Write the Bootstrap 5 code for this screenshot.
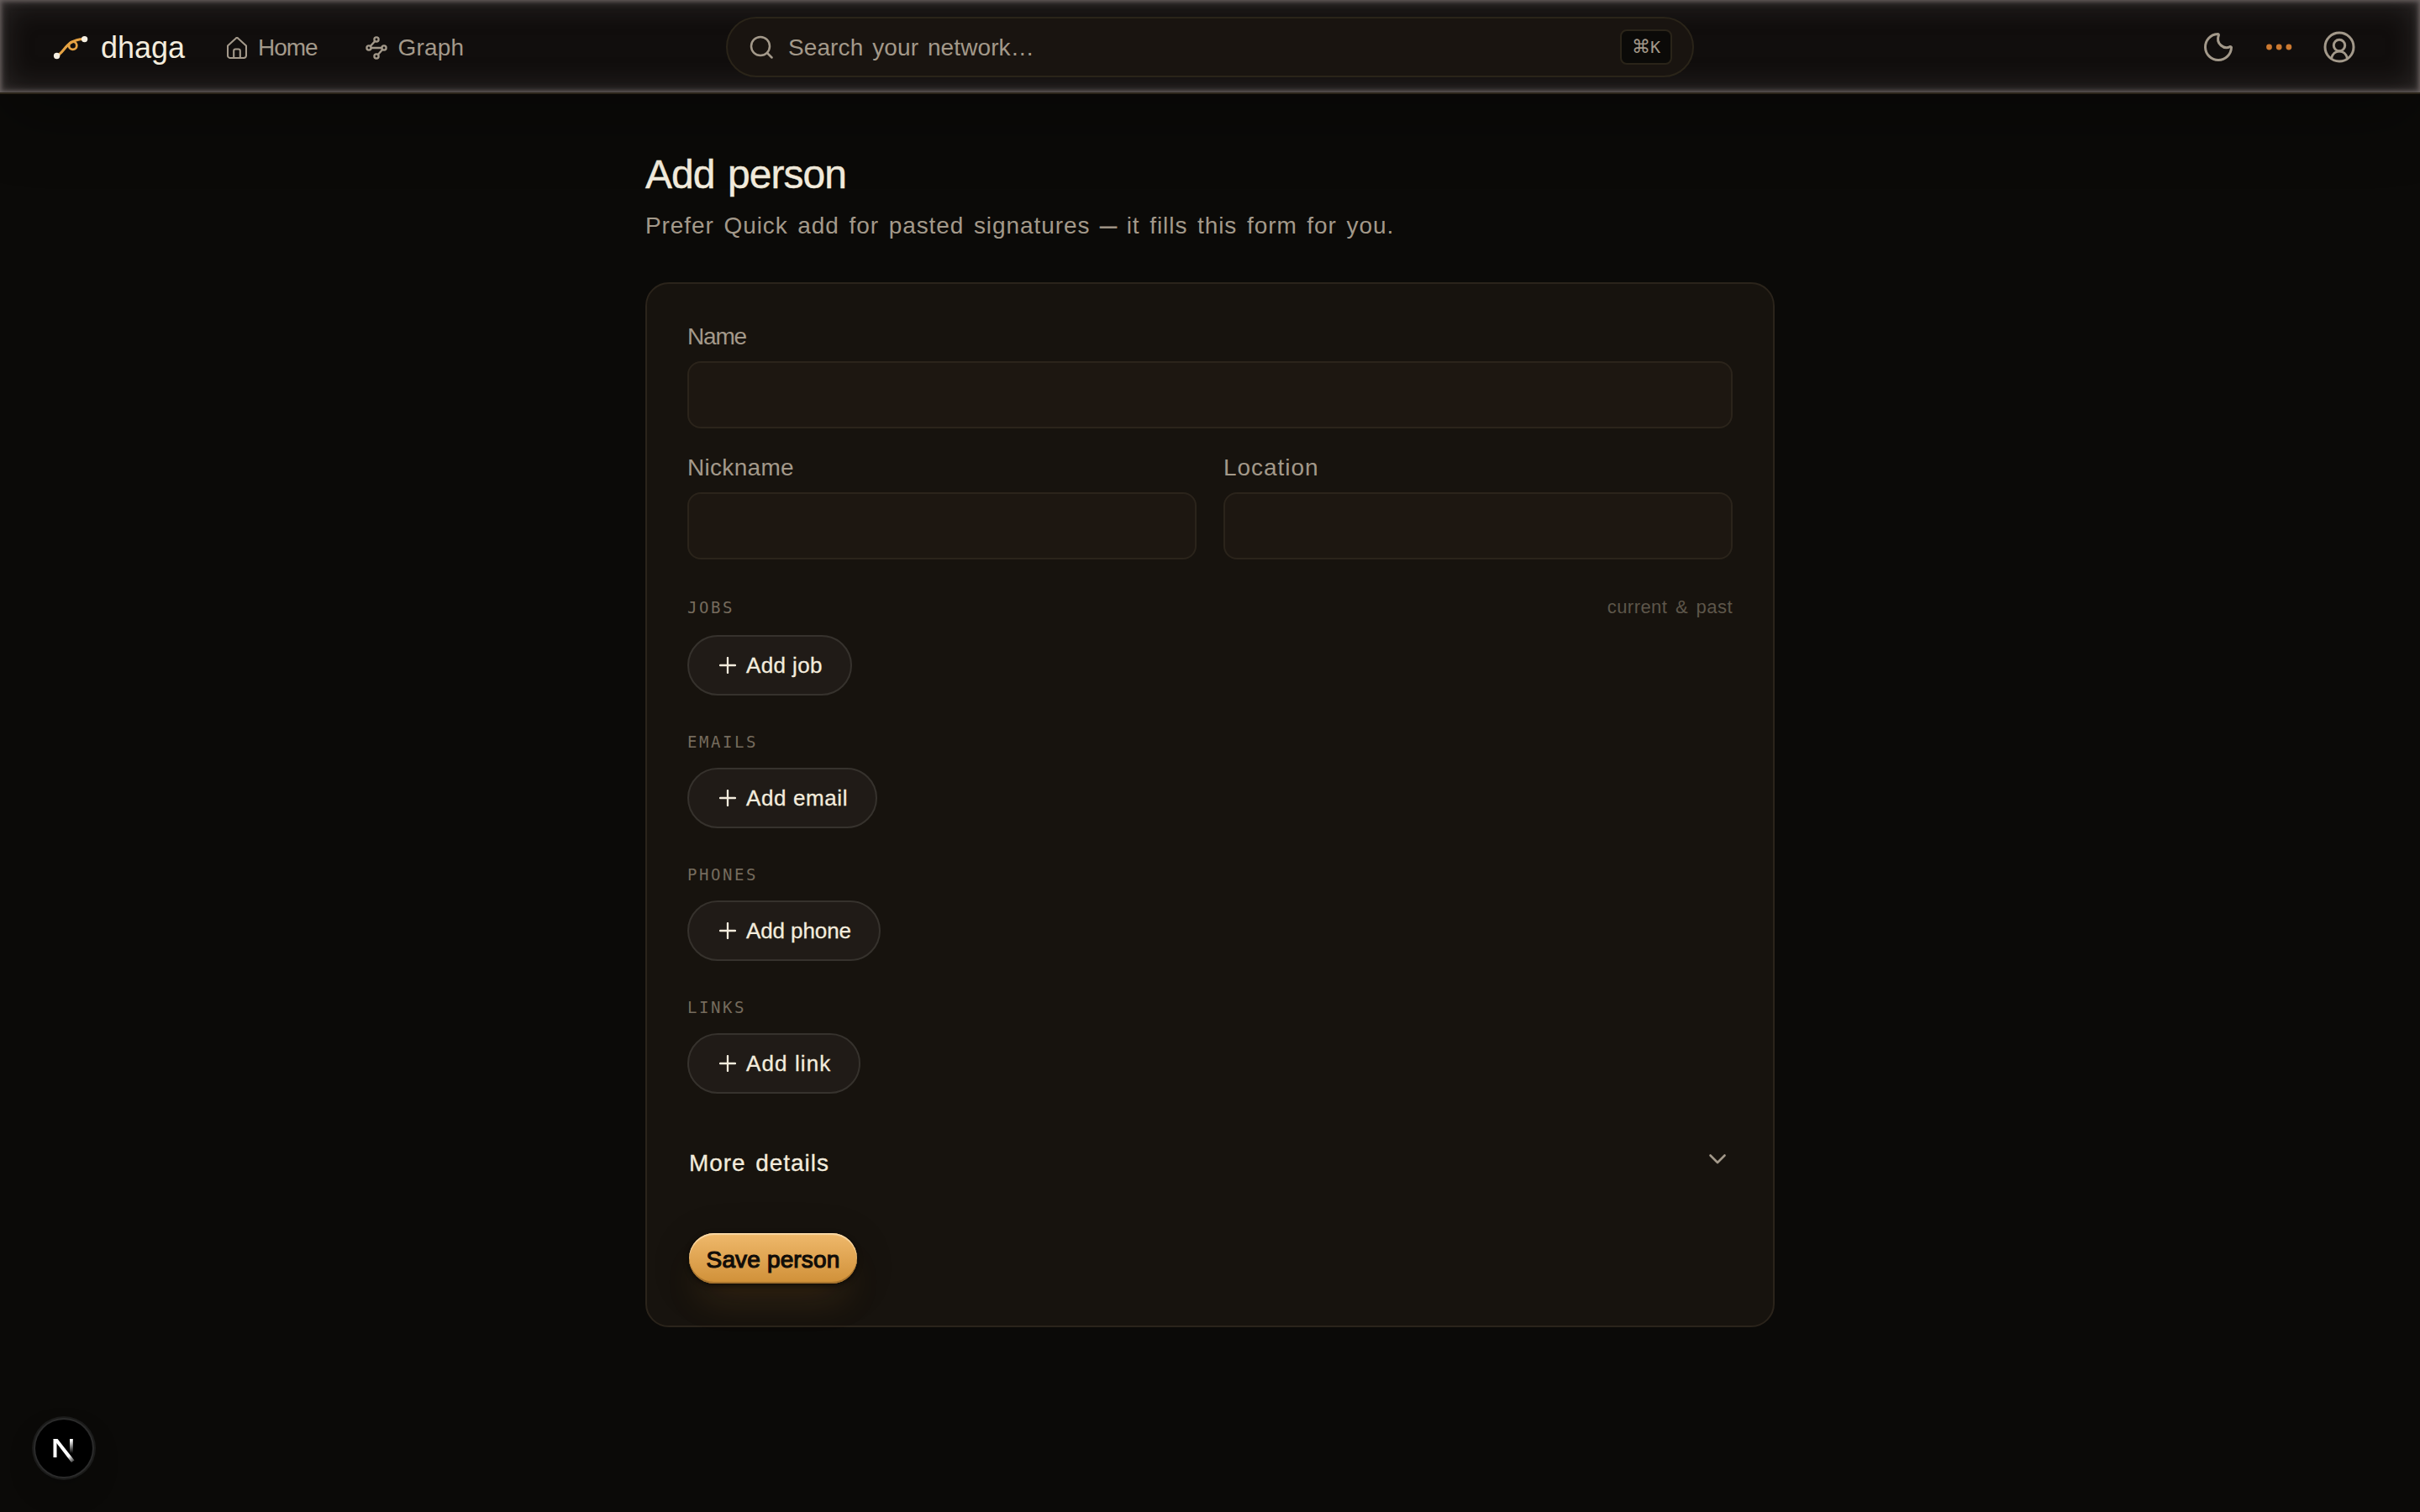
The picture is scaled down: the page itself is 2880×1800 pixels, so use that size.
<!DOCTYPE html>
<html lang="en" data-bs-theme="dark">
<head>
<meta charset="utf-8">
<meta name="viewport" content="width=device-width, initial-scale=1">
<title>Add person · dhaga</title>
<link href="https://cdn.jsdelivr.net/npm/bootstrap@5.3.0/dist/css/bootstrap.min.css" rel="stylesheet">
<style>
  :root { --ink:#f3ecdd; --muted:#a3998a; --line:#2b241b; }
  body { background:#0b0a08; color:var(--ink); font-family:"Liberation Sans",sans-serif; font-size:28px; line-height:36px; word-spacing:3px; min-height:1800px; overflow:hidden; }
  svg { display:block; flex:none; fill:none; stroke:currentColor; stroke-linecap:round; stroke-linejoin:round; }
  .topbar { height:112px; padding:2px 77px 0 62px; background:#110e0d; border-bottom:2px solid #2a2419;
    box-shadow:inset 0 0 5px 1px #6b6362, inset 0 0 10px 2px rgba(105,98,97,.5), inset 0 0 34px 4px rgba(90,84,84,.4), 0 30px 80px rgba(0,0,0,.3); }
  .brand-name { font-size:36px; line-height:44px; margin-left:14px; padding-top:1px; }
  .topnav { color:var(--muted); }
  .topnav a { color:inherit; text-decoration:none; padding-top:1px; }
  .nav-home { margin-left:50px; gap:13px; letter-spacing:-1.1px; }
  .nav-graph { margin-left:58px; gap:12px; letter-spacing:.2px; }
  .search-pill { left:864px; top:20px; width:1152px; height:72px; padding:0 24px 0 26px; background:#191410; border:2px solid #2a2419; border-radius:36px; color:var(--muted); }
  .search-text { margin-left:18px; padding-top:1px; letter-spacing:.1px; }
  .shortcut { width:62px; height:42px; padding:0; border:2px solid #2a2419; border-radius:8px; background:#0b0a08; color:var(--muted); }
  .shortcut span { font:20px/28px "DejaVu Sans Mono",monospace; }
  .shortcut .cmd-key { font:22px/28px "DejaVu Sans",sans-serif; }
  .page-col { width:1344px; padding-top:67px; }
  .page-title { font-size:48px; line-height:58px; letter-spacing:-.95px; margin:0 0 12px; color:var(--ink); font-weight:400; -webkit-text-stroke:.4px currentColor; }
  .page-sub { line-height:40px; height:40px; margin:0 0 47px; color:var(--muted); letter-spacing:.92px; white-space:nowrap; }
  .page-sub .dash { font-size:20px; line-height:1; vertical-align:2px; letter-spacing:0; -webkit-text-stroke:.7px currentColor; }
  .form-panel { height:1244px; padding:48px; background:#17130e; border:2px solid var(--line); border-radius:28px; }
  .field label { display:block; height:29px; line-height:30px; margin-bottom:15px; color:var(--muted); }
  .field .form-control { height:80px; background:#1d1711; border:2px solid var(--line); border-radius:16px; }
  .pair { margin-top:32px; gap:32px; }
  .group-label { font:19px/28px "DejaVu Sans Mono",monospace; letter-spacing:2.560px; color:#756b5d; }
  .hint { font-size:22px; line-height:28px; letter-spacing:.45px; color:#5d564a; }
  .jobs-head { height:31px; margin:43px 0 16px; }
  .group-head { margin:41px 0 17px; }
  .add-btn { height:72px; padding:0 33px 1px 36px; gap:12px; border:2px solid #36322d; border-radius:36px; background:#201b17; color:var(--ink); font-size:26px; line-height:32px; -webkit-text-stroke:.3px currentColor; }
  .add-btn svg { margin-top:1px; }
  .more-row { margin-top:65px; height:35px; padding-left:2px; letter-spacing:.95px; -webkit-text-stroke:.3px currentColor; }
  .save-btn { margin:66px 0 0 2px; width:200px; height:60px; padding:3px 0 0; border:0; border-radius:30px; color:#110d08; font-size:28px; line-height:36px; letter-spacing:.15px; -webkit-text-stroke:1.2px currentColor;
    background:linear-gradient(#efb96c,#d09038);
    box-shadow:inset 0 2px 1px #f9d9a6, inset 0 -2px 0 #a8742e, 0 2px 6px rgba(0,0,0,.6), 0 28px 44px -12px rgba(224,150,50,.17), 0 10px 50px rgba(0,0,0,.16); }
  .dev-badge { left:42px; top:1690px; width:68px; height:68px; background:#000; box-shadow:0 0 0 2px #2b2b2b, 0 0 0 4px #1b1b1a, 0 16px 40px -8px rgba(0,0,0,.3); }
</style>
<script src="https://cdn.jsdelivr.net/npm/bootstrap@5.3.0/dist/js/bootstrap.bundle.min.js"></script>
</head>
<body>
<header class="topbar d-flex align-items-center position-relative">
  <a class="d-flex align-items-center text-decoration-none text-reset" href="#">
    <svg width="44" height="32" viewBox="62 38 44 32"><path d="M67 64.5C77 62 77 45 100 44.5" stroke="#e5a243" stroke-width="3"/><circle cx="86.7" cy="52.2" r="4.6" stroke="#e5a243" stroke-width="2.8"/><circle cx="67.6" cy="64.5" r="3.7" fill="#f5efe2" stroke="none"/><circle cx="100.6" cy="44.6" r="3.7" fill="#f5efe2" stroke="none"/></svg>
    <span class="brand-name">dhaga</span>
  </a>
  <nav class="topnav d-flex align-items-center">
    <a class="nav-home d-flex align-items-center" href="#"><svg width="24" height="26" viewBox="0 0 24 26" stroke-width="2.100"><path d="M1 10.500 10.600 1.700a2 2 0 0 1 2.800 0L23 10.500V22a3 3 0 0 1-3 3H4a3 3 0 0 1-3-3ZM8.200 25v-8.500a2 2 0 0 1 2-2h3.600a2 2 0 0 1 2 2V25"/></svg>Home</a>
    <a class="nav-graph d-flex align-items-center" href="#"><svg width="26" height="28" viewBox="0 0 26 28" stroke-width="2.300"><circle cx="13" cy="4" r="2.600"/><circle cx="4" cy="14" r="2.600"/><circle cx="22" cy="14" r="2.600"/><circle cx="13" cy="24" r="2.600"/><path d="M6.700 14h12.600M11.200 6 5.800 12M20.200 16l-5.400 6"/></svg>Graph</a>
  </nav>
  <div class="search-pill position-absolute d-flex align-items-center">
    <svg width="28" height="28" viewBox="0 0 28 28" stroke-width="2.500"><circle cx="13" cy="13" r="11"/><path d="m21 21 5.500 5.500"/></svg>
    <span class="search-text flex-grow-1">Search your network…</span>
    <kbd class="shortcut d-flex align-items-center justify-content-center"><span class="cmd-key">⌘</span><span>K</span></kbd>
  </div>
  <div class="topnav d-flex align-items-center ms-auto">
    <svg width="36" height="36" viewBox="0 0 36 36" stroke-width="3"><path d="M17 2.500A15.500 15.500 0 1 0 33.500 18.500a1.200 1.200 0 0 0-1.500-1C25 21.500 14.500 14 18.400 4a1.200 1.200 0 0 0-1.400-1.500Z"/></svg>
    <svg width="32" height="10" viewBox="0 0 32 10" style="margin:0 37px 0 38px"><g fill="#cc7930" stroke="none"><circle cx="4.500" cy="5" r="3.400"/><circle cx="16.200" cy="5" r="3.400"/><circle cx="27.900" cy="5" r="3.400"/></g></svg>
    <svg width="38" height="38" viewBox="0 0 38 38" stroke-width="3"><circle cx="19" cy="19" r="17"/><circle cx="19" cy="17" r="6.700"/><path d="M9.500 32.500c2.500-11.500 16.500-11.500 19 0"/></svg>
  </div>
</header>

<main class="page-col mx-auto">
  <h1 class="page-title">Add person</h1>
  <p class="page-sub">Prefer Quick add for pasted signatures <span class="dash">—</span> it fills this form for you.</p>
  <form class="form-panel">
    <div class="field"><label for="name" style="letter-spacing:-1.2px">Name</label><input id="name" class="form-control"></div>
    <div class="pair d-flex">
      <div class="field flex-fill"><label for="nick" style="letter-spacing:.3px">Nickname</label><input id="nick" class="form-control"></div>
      <div class="field flex-fill"><label for="loc" style="letter-spacing:.95px">Location</label><input id="loc" class="form-control"></div>
    </div>
    <div class="jobs-head d-flex justify-content-between align-items-baseline"><span class="group-label">JOBS</span><span class="hint">current &amp; past</span></div>
    <button type="button" class="add-btn d-flex align-items-center"><svg width="20" height="20" viewBox="0 0 20 20" stroke-width="2.300"><path d="M10 1v18M1 10h18"/></svg><span style="letter-spacing:.4px">Add job</span></button>
    <div class="group-label group-head">EMAILS</div>
    <button type="button" class="add-btn d-flex align-items-center"><svg width="20" height="20" viewBox="0 0 20 20" stroke-width="2.300"><path d="M10 1v18M1 10h18"/></svg><span style="letter-spacing:.6px">Add email</span></button>
    <div class="group-label group-head">PHONES</div>
    <button type="button" class="add-btn d-flex align-items-center"><svg width="20" height="20" viewBox="0 0 20 20" stroke-width="2.300"><path d="M10 1v18M1 10h18"/></svg><span style="letter-spacing:-.1px">Add phone</span></button>
    <div class="group-label group-head">LINKS</div>
    <button type="button" class="add-btn d-flex align-items-center"><svg width="20" height="20" viewBox="0 0 20 20" stroke-width="2.300"><path d="M10 1v18M1 10h18"/></svg><span style="letter-spacing:1.1px">Add link</span></button>
    <div class="more-row d-flex justify-content-between"><span>More details</span><svg class="topnav" width="22" height="14" viewBox="0 0 22 14" stroke-width="2.600" style="margin:6px 7px 0 0"><path d="m2.500 2.500 8.500 8.500 8.500-8.500"/></svg></div>
    <button type="button" class="save-btn d-flex align-items-center justify-content-center">Save person</button>
  </form>
</main>

<div class="dev-badge position-absolute rounded-circle">
  <svg width="68" height="68" viewBox="0 0 68 68" stroke="none">
    <defs><linearGradient id="slant" gradientUnits="userSpaceOnUse" x1="34" y1="40" x2="45" y2="54"><stop offset=".35" stop-color="#fff"/><stop offset="1" stop-color="#fff" stop-opacity="0"/></linearGradient><linearGradient id="stem" x1="0" y1="0" x2="0" y2="1"><stop offset=".1" stop-color="#fff"/><stop offset="1" stop-color="#fff" stop-opacity="0"/></linearGradient></defs>
    <rect x="21.500" y="23" width="4" height="22" fill="#fff" stroke="none"/><rect x="41" y="23" width="3.800" height="17" fill="url(#stem)" stroke="none"/><path d="M21.500 23h5l20 25.500-3.500 2.500Z" fill="url(#slant)" stroke="none"/>
  </svg>
</div>
</body>
</html>
